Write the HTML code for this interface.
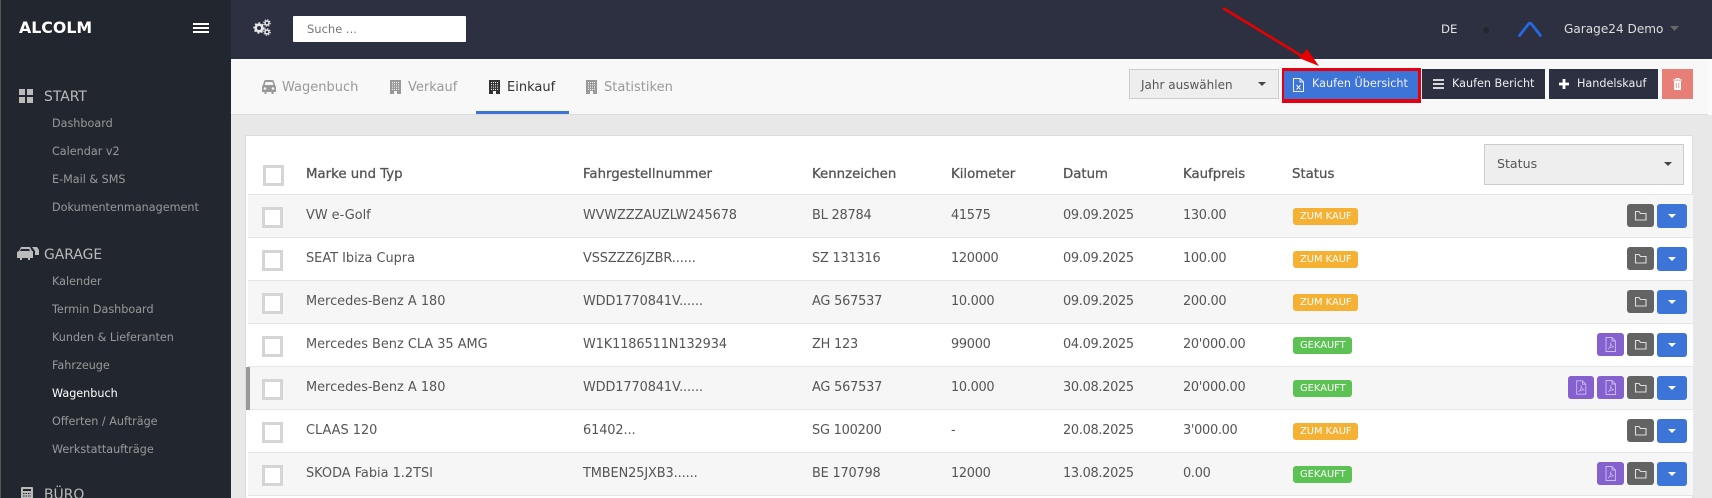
<!DOCTYPE html>
<html lang="de"><head><meta charset="utf-8"><title>Einkauf</title>
<style>
html,body{margin:0;padding:0;width:1712px;height:498px;overflow:hidden}
body{position:relative;background:#e8e8e8;font-family:"DejaVu Sans","Liberation Sans",sans-serif;color:#555}
div,span,svg{position:absolute;box-sizing:border-box}
.t{white-space:nowrap;line-height:20px}
#side{left:0;top:0;width:231px;height:498px;background:#22262f;border-left:1px solid #555}
#top{left:231px;top:0;width:1481px;height:59px;background:#2d3040}
#tabs{left:231px;top:59px;width:1477px;height:56px;background:#f8f8f8;border-bottom:1px solid #ddd}
#edge{left:1708px;top:59px;width:4px;height:56px;background:#fbfbfb}
.s{font-size:13.9px;color:#bbb;left:43px}
.i{font-size:11.2px;color:#999;left:51px}
.tab{font-size:13px;color:#999;top:78px}
.btn{height:30px;top:69px;background:#2d3040;color:#eee;font-size:11.2px}
#card{left:245px;top:135px;width:1448px;height:363px;background:#fff;border:1px solid #ddd;border-bottom:0}
.h{font-size:13.3px;color:#555;top:165px;-webkit-text-stroke:.3px #555}
.r{left:248px;width:1445px;height:43px;border-bottom:1px solid #e6e6e6;background:#fff}
.r.o{background:#f6f6f6}
.cb{width:21px;height:21px;border:3px solid #d5d5d5;background:#fff;left:14px;top:12px}
.c{font-size:12.9px;color:#555;top:11px}
.c1{left:58px}.c2{left:335px;letter-spacing:-.1px}.c3{left:564px;letter-spacing:-.2px}.c4{left:703px;letter-spacing:-.3px}.c5{left:815px;letter-spacing:-.3px}.c6{left:935px;letter-spacing:-.3px}
.b{left:1045px;top:13px;height:17px;line-height:17px;border-radius:3px;color:#fff;font-size:9.9px;padding:0 7px;white-space:nowrap}
.y{background:#f5b133;width:65px}.g{background:#5cc254;width:59px}
.ab{top:9px;height:23px;border-radius:3px}
.bl{left:1409px;width:30px;height:24px;background:#3c74d8}
.gr{left:1379px;width:27px;background:#636363}
.p1{left:1349px;width:27px;background:#8560cf}
.p2{left:1320px;width:26px;background:#8560cf}
.ab svg{left:0;top:0}
</style></head><body>
<svg width="0" height="0" style="left:0;top:0"><defs>
<symbol id="folder" viewBox="0 0 27 23"><path d="M8.500 7.500h3.500l1.500 2h5.500v6.500h-10.500z" fill="none" stroke="#ddd" stroke-width="1.100"/></symbol>
<symbol id="caret" viewBox="0 0 30 24"><path d="M11 10h8l-4 4z" fill="#fff"/></symbol>
<symbol id="pdf" viewBox="0 0 27 23"><path d="M9 4.500h6l3.500 3.500v10.500h-9.500zM15 4.500v3.500h3.500" fill="none" stroke="#cdbdee" stroke-width=".9"/><path d="M11 16c2-1 3-4 2.500-6.500c.5 3 1.500 4 3.500 4.500c-2-.2-4.500.4-6 2" fill="none" stroke="#cdbdee" stroke-width=".7"/></symbol>
<symbol id="bld" viewBox="0 0 11 14"><rect width="11" height="14"/><path d="M2 2.500H9M2 4.800H9M2 7.100H9M2 9.400H9" stroke="#f8f8f8" stroke-width="1" stroke-dasharray="1 1"/><rect x="4" y="11" width="3" height="3" fill="#f8f8f8"/></symbol>
</defs></svg>

<div id="side">
<div class="t" style="left:18px;top:18px;font-size:15.8px;font-weight:bold;color:#fff">ALCOLM</div>
<svg style="left:192px;top:23px" width="16" height="10"><path d="M0 1H16M0 5H16M0 9H16" stroke="#fff" stroke-width="2"/></svg>
<svg style="left:18px;top:89px" width="14" height="14"><path d="M0 0h6v6H0zM8 0h6v6H8zM0 8h6v6H0zM8 8h6v6H8z" fill="#bbb"/></svg>
<div class="t s" style="top:87px">START</div>
<div class="t i" style="top:114px">Dashboard</div>
<div class="t i" style="top:142px">Calendar v2</div>
<div class="t i" style="top:170px">E-Mail &amp; SMS</div>
<div class="t i" style="top:198px">Dokumentenmanagement</div>
<svg style="left:15px;top:246px" width="24" height="15" viewBox="0 0 24 15"><path d="M5 1h9l2 4h1v7h-3v2h-2v-2H6v2H4v-2H1V6l2-1z" fill="#bbb"/><path d="M16 1h5l2 3v5h-4V5z" fill="#bbb"/><path d="M5 3h8l1 2H4z" fill="#22262f"/></svg>
<div class="t s" style="top:245px">GARAGE</div>
<div class="t i" style="top:272px">Kalender</div>
<div class="t i" style="top:300px">Termin Dashboard</div>
<div class="t i" style="top:328px">Kunden &amp; Lieferanten</div>
<div class="t i" style="top:356px">Fahrzeuge</div>
<div class="t i" style="top:384px;color:#fff">Wagenbuch</div>
<div class="t i" style="top:412px">Offerten / Aufträge</div>
<div class="t i" style="top:440px">Werkstattaufträge</div>
<svg style="left:19px;top:487px" width="14" height="11"><path d="M1 1a1 1 0 0 1 1-1h10a1 1 0 0 1 1 1v10H1z" fill="#bbb"/><rect x="3" y="2" width="8" height="2" fill="#22262f"/><path d="M3 6.500h8M3 9h8" stroke="#22262f" stroke-dasharray="1.500 1"/></svg>
<div class="t s" style="top:485px">BÜRO</div>
</div>

<div id="top">
<svg style="left:22px;top:19px" width="18" height="17" viewBox="0 0 18 17"><g fill="none" stroke="#e8e8e8"><circle cx="6" cy="9" r="3.300" stroke-width="2.600"/><circle cx="6" cy="9" r="5" stroke-width="1.400" stroke-dasharray="1.800 2"/><circle cx="14" cy="4" r="2" stroke-width="1.500"/><circle cx="14" cy="4" r="3.300" stroke-width="1" stroke-dasharray="1.300 1.300"/><circle cx="14" cy="13" r="2" stroke-width="1.500"/><circle cx="14" cy="13" r="3.300" stroke-width="1" stroke-dasharray="1.300 1.300"/></g></svg>
<div style="left:62px;top:16px;width:173px;height:26px;background:#fff;border-radius:1px"></div>
<div class="t" style="left:76px;top:19px;font-size:11.5px;color:#777">Suche ...</div>
<div class="t" style="left:1210px;top:19px;font-size:11.7px;color:#e4e4e4">DE</div>
<div style="left:1252px;top:27px;width:6px;height:6px;border-radius:50%;background:#22262f"></div>
<svg style="left:1287px;top:21px" width="24" height="16"><path d="M1.500 14.500L10.500 3Q12 1.500 13.500 3L22.500 14.500" fill="none" stroke="#2468e4" stroke-width="2.800" stroke-linecap="round"/></svg>
<div class="t" style="left:1333px;top:19px;font-size:12.1px;color:#ddd">Garage24 Demo</div>
<svg style="left:1439px;top:26px" width="9" height="5"><path d="M0 0h9L4.500 5z" fill="#666"/></svg>
</div>

<div id="tabs"></div><div id="edge"></div>
<svg style="left:261px;top:80px" width="16" height="14" viewBox="0 0 16 14" fill="#999"><path d="M3 1.500A2 2 0 0 1 5 0h6a2 2 0 0 1 2 1.500L14 5l1 1.500V12h-2.500v2h-2v-2h-5v2h-2v-2H1V6.500L2 5z"/><path d="M4.500 2h7l.8 3H3.700z" fill="#f8f8f8"/><circle cx="4" cy="8.500" r="1.300" fill="#f8f8f8"/><circle cx="12" cy="8.500" r="1.300" fill="#f8f8f8"/></svg>
<div class="t tab" style="left:282px">Wagenbuch</div>
<svg style="left:390px;top:80px;fill:#999" width="11" height="14"><use href="#bld"/></svg>
<div class="t tab" style="left:408px">Verkauf</div>
<svg style="left:489px;top:80px;fill:#333" width="11" height="14"><use href="#bld"/></svg>
<div class="t tab" style="left:507px;color:#333">Einkauf</div>
<svg style="left:586px;top:80px;fill:#999" width="11" height="14"><use href="#bld"/></svg>
<div class="t tab" style="left:604px">Statistiken</div>
<div style="left:476px;top:111px;width:93px;height:3px;background:#3c74d8"></div>

<div style="left:1129px;top:69px;width:150px;height:30px;background:#eee;border:1px solid #ccc"></div>
<div class="t" style="left:1141px;top:75px;font-size:12px;color:#555">Jahr auswählen</div>
<svg style="left:1258px;top:82px" width="8" height="4"><path d="M0 0h8L4 4z" fill="#444"/></svg>

<div style="left:1282px;top:68px;width:139px;height:35px;background:#e6000f"></div>
<div style="left:1284px;top:71px;width:134px;height:28px;background:#3c74d8"></div>
<svg style="left:1293px;top:78px" width="11" height="14" viewBox="0 0 11 14"><path d="M.5.500h6.500l3.500 3.500v9.500H.5zM7 .5v3.500h3.500" fill="none" stroke="#eef" stroke-width="1"/><path d="M3.500 7l4 4.500M7.500 7l-4 4.500" stroke="#eef" stroke-width="1"/></svg>
<div class="t" style="left:1312px;top:74px;font-size:11.2px;color:#f2f2f2">Kaufen Übersicht</div>
<div class="btn" style="left:1422px;width:123px"></div>
<svg style="left:1433px;top:79px" width="11" height="10"><path d="M0 1H11M0 5H11M0 9H11" stroke="#eee" stroke-width="1.700"/></svg>
<div class="t" style="left:1452px;top:74px;font-size:11.2px;color:#eee">Kaufen Bericht</div>
<div class="btn" style="left:1549px;width:109px"></div>
<svg style="left:1559px;top:79px" width="10" height="10"><path d="M5 0V10M0 5H10" stroke="#fff" stroke-width="2.800"/></svg>
<div class="t" style="left:1577px;top:74px;font-size:11.2px;color:#eee">Handelskauf</div>
<div class="btn" style="left:1662px;width:31px;background:#e77f76"></div>
<svg style="left:1673px;top:78px" width="9" height="12" viewBox="0 0 9 12"><path d="M0 2h9M3 2V.5h3V2" fill="none" stroke="#fff"/><path d="M1 3h7v9H1z" fill="#fff"/><path d="M3.200 5v5M5.800 5v5" stroke="#e77f76" stroke-width=".8"/></svg>

<svg style="left:1215px;top:0" width="115" height="72"><path d="M8 8L95 61" stroke="#e60000" stroke-width="2.600"/><path d="M104 66L84 58L92 49z" fill="#e60000"/></svg>

<div id="card"></div>
<div style="left:248px;top:194px;width:1445px;height:1px;background:#e6e6e6"></div>
<div style="left:263px;top:165px;width:21px;height:21px;border:3px solid #d5d5d5;background:#fff"></div>
<div class="t h" style="left:306px">Marke und Typ</div>
<div class="t h" style="left:583px">Fahrgestellnummer</div>
<div class="t h" style="left:812px">Kennzeichen</div>
<div class="t h" style="left:951px">Kilometer</div>
<div class="t h" style="left:1063px">Datum</div>
<div class="t h" style="left:1183px">Kaufpreis</div>
<div class="t h" style="left:1292px">Status</div>
<div style="left:1484px;top:144px;width:200px;height:41px;background:#eee;border:1px solid #ccc"></div>
<div class="t" style="left:1497px;top:154px;font-size:12.6px;color:#555">Status</div>
<svg style="left:1664px;top:162px" width="8" height="4"><path d="M0 0h8L4 4z" fill="#444"/></svg>

<div class="r o" style="top:195px"><div class="cb"></div>
<div class="t c c1">VW e-Golf</div><div class="t c c2">WVWZZZAUZLW245678</div><div class="t c c3">BL 28784</div><div class="t c c4">41575</div><div class="t c c5">09.09.2025</div><div class="t c c6">130.00</div><div class="b y">ZUM KAUF</div>
<div class="ab gr"><svg width="27" height="23"><use href="#folder"/></svg></div><div class="ab bl"><svg width="30" height="24"><use href="#caret"/></svg></div></div>

<div class="r" style="top:238px"><div class="cb"></div>
<div class="t c c1">SEAT Ibiza Cupra</div><div class="t c c2">VSSZZZ6JZBR......</div><div class="t c c3">SZ 131316</div><div class="t c c4">120000</div><div class="t c c5">09.09.2025</div><div class="t c c6">100.00</div><div class="b y">ZUM KAUF</div>
<div class="ab gr"><svg width="27" height="23"><use href="#folder"/></svg></div><div class="ab bl"><svg width="30" height="24"><use href="#caret"/></svg></div></div>

<div class="r o" style="top:281px"><div class="cb"></div>
<div class="t c c1">Mercedes-Benz A 180</div><div class="t c c2">WDD1770841V......</div><div class="t c c3">AG 567537</div><div class="t c c4">10.000</div><div class="t c c5">09.09.2025</div><div class="t c c6">200.00</div><div class="b y">ZUM KAUF</div>
<div class="ab gr"><svg width="27" height="23"><use href="#folder"/></svg></div><div class="ab bl"><svg width="30" height="24"><use href="#caret"/></svg></div></div>

<div class="r" style="top:324px"><div class="cb"></div>
<div class="t c c1">Mercedes Benz CLA 35 AMG</div><div class="t c c2">W1K1186511N132934</div><div class="t c c3">ZH 123</div><div class="t c c4">99000</div><div class="t c c5">04.09.2025</div><div class="t c c6">20'000.00</div><div class="b g">GEKAUFT</div>
<div class="ab p1"><svg width="27" height="23"><use href="#pdf"/></svg></div><div class="ab gr"><svg width="27" height="23"><use href="#folder"/></svg></div><div class="ab bl"><svg width="30" height="24"><use href="#caret"/></svg></div></div>

<div class="r o" style="top:367px"><div class="cb"></div>
<div class="t c c1">Mercedes-Benz A 180</div><div class="t c c2">WDD1770841V......</div><div class="t c c3">AG 567537</div><div class="t c c4">10.000</div><div class="t c c5">30.08.2025</div><div class="t c c6">20'000.00</div><div class="b g">GEKAUFT</div>
<div class="ab p2"><svg width="26" height="23"><use href="#pdf"/></svg></div><div class="ab p1"><svg width="27" height="23"><use href="#pdf"/></svg></div><div class="ab gr"><svg width="27" height="23"><use href="#folder"/></svg></div><div class="ab bl"><svg width="30" height="24"><use href="#caret"/></svg></div></div>
<div style="left:246px;top:367px;width:4px;height:43px;background:#999"></div>

<div class="r" style="top:410px"><div class="cb"></div>
<div class="t c c1">CLAAS 120</div><div class="t c c2">61402...</div><div class="t c c3">SG 100200</div><div class="t c c4">-</div><div class="t c c5">20.08.2025</div><div class="t c c6">3'000.00</div><div class="b y">ZUM KAUF</div>
<div class="ab gr"><svg width="27" height="23"><use href="#folder"/></svg></div><div class="ab bl"><svg width="30" height="24"><use href="#caret"/></svg></div></div>

<div class="r o" style="top:453px"><div class="cb"></div>
<div class="t c c1">SKODA Fabia 1.2TSI</div><div class="t c c2">TMBEN25JXB3......</div><div class="t c c3">BE 170798</div><div class="t c c4">12000</div><div class="t c c5">13.08.2025</div><div class="t c c6">0.00</div><div class="b g">GEKAUFT</div>
<div class="ab p1"><svg width="27" height="23"><use href="#pdf"/></svg></div><div class="ab gr"><svg width="27" height="23"><use href="#folder"/></svg></div><div class="ab bl"><svg width="30" height="24"><use href="#caret"/></svg></div></div>
</body></html>
